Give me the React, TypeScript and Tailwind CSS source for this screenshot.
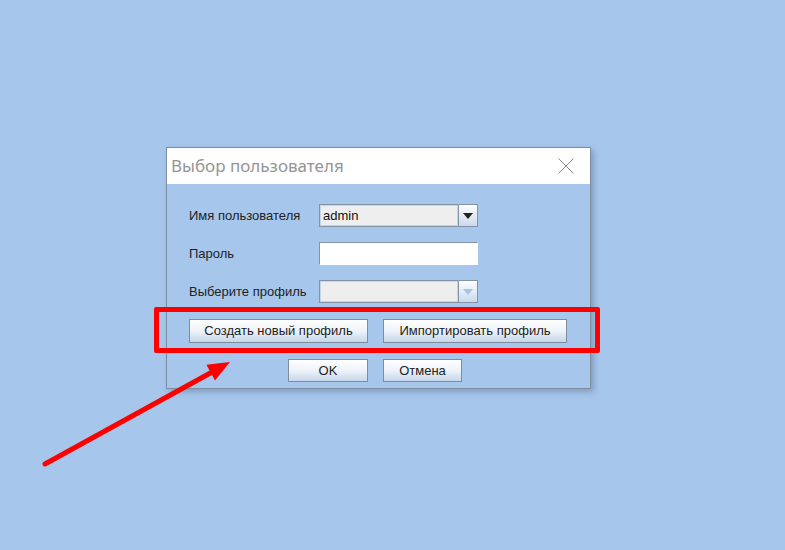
const labelFont = { fontFamily: '"Liberation Sans", Arial, sans-serif' };

function ComboBox({ value, disabled = false }: { value?: string; disabled?: boolean }) {
  return (
    <div className="flex h-[23px] w-[159px] border border-[#8394a8] bg-[#eeeeee]">
      <div className="flex flex-1 items-center border border-[#c6d5e6] px-[2px] text-[13px] text-[#111]">
        {value}
      </div>
      <div className="flex w-[19px] items-center justify-center border-l border-[#8394a8] bg-gradient-to-b from-[#ffffff] to-[#c9d9ec]">
        <svg width="10" height="6" viewBox="0 0 10 6">
          <path d="M0 0 H10 L5 6 Z" fill={disabled ? "#a9c3e3" : "#222"} />
        </svg>
      </div>
    </div>
  );
}

function Button({ label, width }: { label: string; width: string }) {
  return (
    <button
      className={`flex h-full items-center justify-center border border-[#7f8c9b] bg-gradient-to-b from-[#ffffff] via-[#eef3f9] to-[#c6d6ea] text-[13px] text-[#222] ${width}`}
    >
      {label}
    </button>
  );
}

export default function App() {
  return (
    <div className="relative h-[550px] w-full overflow-hidden bg-[#a7c6ec]" style={labelFont}>
      {/* dialog window */}
      <div className="absolute left-[166px] top-[147px] flex h-[242px] w-[425px] flex-col border border-[#7f8da0] bg-[#a7c6ec] shadow-[3px_3px_6px_rgba(60,80,110,0.35)]">
        <div className="flex h-[36px] items-center justify-between bg-white pl-[4px] pr-[16px]">
          <span
            className="text-[17px] text-[#959595]"
            style={{ fontFamily: '"Noto Sans", "Open Sans", sans-serif' }}
          >
            Выбор пользователя
          </span>
          <svg width="16" height="16" viewBox="0 0 16 16">
            <path d="M0.5 0.5 L15.5 15.5 M15.5 0.5 L0.5 15.5" stroke="#8a8a8a" strokeWidth="1" />
          </svg>
        </div>

        <div className="flex flex-col pl-[22px] pt-[20px]">
          <div className="flex flex-col gap-[15px]">
            <div className="flex items-center">
              <span className="w-[130px] text-[13px] text-[#222]">Имя пользователя</span>
              <ComboBox value="admin" />
            </div>
            <div className="flex items-center">
              <span className="w-[130px] text-[13px] text-[#222]">Пароль</span>
              <div className="h-[23px] w-[159px] border border-[#8394a8] border-b-white border-r-white bg-white" />
            </div>
            <div className="flex items-center">
              <span className="w-[130px] text-[13px] text-[#222]">Выберите профиль</span>
              <ComboBox disabled />
            </div>
          </div>

          <div className="mt-[16px] flex h-[24px] gap-[15px]">
            <Button label="Создать новый профиль" width="w-[179px]" />
            <Button label="Импортировать профиль" width="w-[184px]" />
          </div>

          <div className="mt-[16px] flex h-[23px] gap-[15px] pl-[99px]">
            <Button label="OK" width="w-[80px]" />
            <Button label="Отмена" width="w-[79px]" />
          </div>
        </div>
      </div>

      {/* annotation: red frame */}
      <div className="absolute left-[154px] top-[307px] h-[46px] w-[446px] rounded-[2px] border-[5px] border-[#ff0000]" />

      {/* annotation: arrow */}
      <svg className="absolute left-0 top-0" width="785" height="550" viewBox="0 0 785 550">
        <line x1="45" y1="464" x2="214" y2="371" stroke="#ff0000" strokeWidth="5" strokeLinecap="round" />
        <path d="M230 362 L215 380.5 L206.4 364.7 Z" fill="#ff0000" />
      </svg>
    </div>
  );
}
